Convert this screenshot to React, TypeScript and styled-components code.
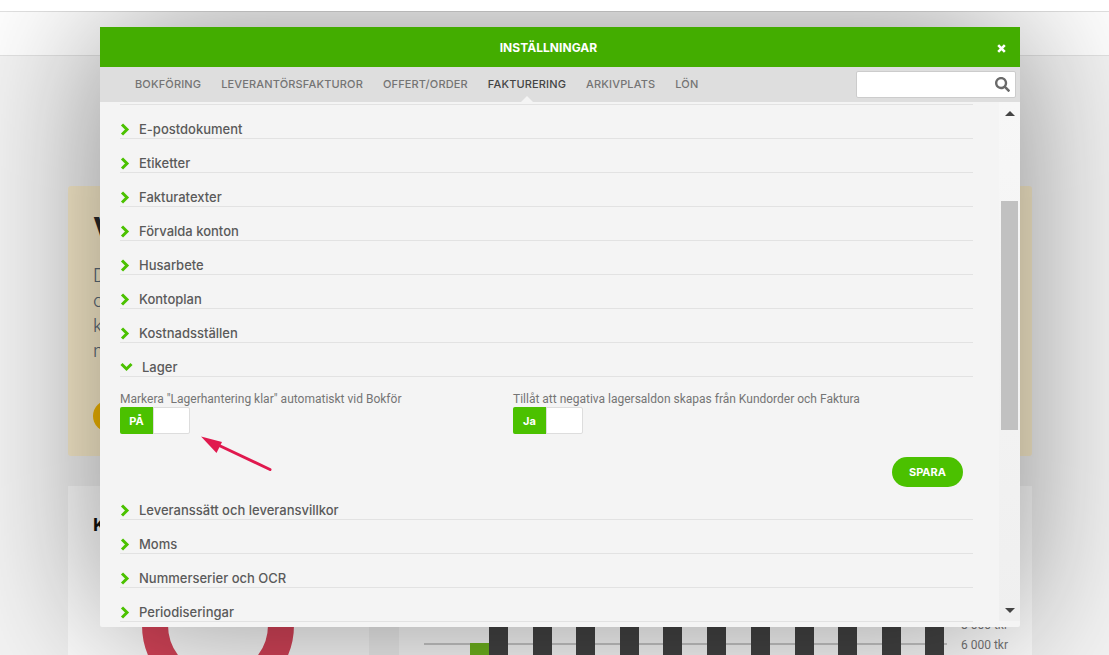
import {FunctionComponent} from 'react'
import styled, {createGlobalStyle} from 'styled-components'
import {FaSearch} from 'react-icons/fa'

const GlobalStyle = createGlobalStyle`
    html, body {
        margin: 0;
        padding: 0;
        background: #f4f4f4;
    }

    * {
        box-sizing: border-box;
    }
`

const Page = styled.div`
    position: relative;
    width: 1109px;
    height: 655px;
    overflow: hidden;
    padding-top: 11px;
    background: #f4f4f4;
    font-family: Inter, "Open Sans", sans-serif;
`

const TopStrip = styled.div`
    position: absolute;
    left: 0;
    right: 0;
    top: 0;
    height: 11px;
    background: #fff;
`

const TopBar = styled.div`
    height: 45px;
    background: #fff;
    border-top: 1px solid #e2e2e2;
    border-bottom: 1px solid #e2e2e2;
`

const Content = styled.div`
    width: 964px;
    margin: 130px 0 0 68px;
`

const Banner = styled.div`
    height: 270px;
    padding: 24px 25px;
    background: #fdf0cf;
    border-radius: 3px;
`

const BannerTitle = styled.h2`
    margin: 0 0 13px;
    font-size: 32px;
    line-height: 40px;
    font-weight: 700;
    color: #2a2a2a;
`

const BannerLine = styled.p`
    margin: 0;
    font-size: 18px;
    line-height: 25px;
    font-weight: 300;
    color: #5d6b78;
`

const BannerButton = styled.div`
    width: 150px;
    height: 32px;
    margin-top: 37px;
    border-radius: 16px;
    background: #f5b800;
`

const Cards = styled.div`
    display: grid;
    grid-template-columns: 301px 633px;
    gap: 30px;
    margin-top: 30px;
`

const Card = styled.div`
    height: 260px;
    padding: 27px 25px 0;
    background: #fff;
`

const CardTitle = styled.h3`
    margin: 0;
    font-size: 18px;
    line-height: 24px;
    font-weight: 700;
    color: #111;
`

const Donut = styled.svg`
    display: block;
    margin: 12px auto 0 49px;
`

const ChartSvg = styled.svg`
    display: block;
    margin: 93px 0 0 -25px;
`

const Overlay = styled.div`
    position: absolute;
    left: 0;
    right: 0;
    top: 11px;
    bottom: 0;
    overflow: hidden;
`

const Modal = styled.div`
    position: absolute;
    left: 100px;
    top: 16px;
    width: 920px;
    height: 600px;
    display: flex;
    flex-direction: column;
    background: #f4f4f4;
    border-radius: 2px;
    box-shadow: 0 0 150px rgba(0, 0, 0, 0.45);
`

const ModalHeader = styled.div`
    flex: none;
    height: 40px;
    display: flex;
    align-items: center;
    padding-right: 14px;
    background: #43ad00;
    color: #fff;
`

const ModalTitle = styled.div`
    flex: 1;
    text-align: center;
    font-size: 12px;
    font-weight: 700;
    letter-spacing: 0.05px;
`

const CloseIcon = styled.svg`
    flex: none;
    display: block;
    margin-top: 2px;
`

const Tabs = styled.div`
    flex: none;
    height: 35px;
    display: flex;
    align-items: center;
    gap: 20px;
    padding: 0 4px 0 35px;
    background: #dedede;
`

const Tab = styled.div<{ $active?: boolean }>`
    position: relative;
    line-height: 35px;
    font-size: 11px;
    font-weight: 500;
    letter-spacing: 0.15px;
    color: ${p => p.$active ? '#444' : '#747474'};

    ${p => p.$active && `
        &::after {
            content: '';
            position: absolute;
            left: 50%;
            bottom: 0;
            margin-left: -6px;
            border: 6px solid transparent;
            border-top: 0;
            border-bottom-color: #f4f4f4;
        }
    `}
`

const SearchBox = styled.div`
    width: 160px;
    height: 27px;
    margin: 0 0 0 auto;
    display: flex;
    align-items: center;
    justify-content: flex-end;
    padding-right: 5px;
    background: #fff;
    border: 1px solid #ccc;
    border-radius: 2px;
    color: #6a6a6a;
`

const SearchIcon = styled(FaSearch)`
    width: 15px;
    height: 15px;
`

const ModalBody = styled.div`
    flex: 1;
    min-height: 0;
    display: flex;
`

const List = styled.div`
    flex: 1;
    min-width: 0;
    overflow: hidden;
    padding: 2px 26px 0 20px;
`

const TopLine = styled.div`
    height: 1px;
    background: #e2e2e2;
`

const Row = styled.div`
    height: 34px;
    display: flex;
    align-items: flex-end;
    border-bottom: 1px solid #e2e2e2;
    color: #5a5a5a;
    font-size: 13px;
    font-weight: 500;
    line-height: 16px;
    padding-bottom: 1px;
`

const RowIcon = styled.span<{ $open?: boolean }>`
    flex: none;
    width: ${p => p.$open ? '22px' : '19px'};
    height: 16px;
    display: flex;
    align-items: center;
`

const Panel = styled.div`
    height: 109px;
    padding: 15px 10px 0 0;
`

const Settings = styled.div`
    display: grid;
    grid-template-columns: 393px 1fr;
`

const FieldLabel = styled.div`
    font-family: Roboto, sans-serif;
    font-size: 12px;
    line-height: 14px;
    color: #757575;
    margin-bottom: 1px;
`

const Toggle = styled.div`
    width: 70px;
    height: 27px;
    display: flex;
    background: #fff;
    border: 1px solid #ddd;
    border-radius: 2px;
`

const ToggleOn = styled.div`
    width: 34px;
    margin: -1px 0 -1px -1px;
    display: flex;
    align-items: center;
    justify-content: center;
    background: #4bc100;
    border-right: 1px solid #ddd;
    border-radius: 2px 0 0 2px;
    color: #fff;
    font-size: 11px;
    font-weight: 700;
`

const SaveRow = styled.div`
    display: flex;
    justify-content: flex-end;
    margin-top: 23px;
`

const SaveButton = styled.button`
    width: 71px;
    height: 30px;
    padding: 0;
    border: none;
    border-radius: 15px;
    background: #4bc100;
    color: #fff;
    font-family: inherit;
    font-size: 11px;
    font-weight: 700;
`

const Scrollbar = styled.div`
    flex: none;
    width: 21px;
    margin-bottom: 6px;
    display: flex;
    flex-direction: column;
    align-items: center;
    padding: 9px 0 8px;
    background: linear-gradient(#f7f7f7, #efefef);
`

const ScrollThumb = styled.div`
    width: 17px;
    height: 229px;
    margin-top: 85px;
    background: #c1c1c1;
`

const ScrollArrow = styled.div<{ $down?: boolean }>`
    width: 0;
    height: 0;
    border: 5px solid transparent;
    ${p => p.$down
            ? 'border-top: 5px solid #444; border-bottom: 0; margin-top: auto;'
            : 'border-bottom: 5px solid #444; border-top: 0;'}
`

const Arrow = styled.svg`
    position: absolute;
    left: 100px;
    top: 400px;
    pointer-events: none;
`

const topRows = ['E-postdokument', 'Etiketter', 'Fakturatexter', 'Förvalda konton', 'Husarbete', 'Kontoplan', 'Kostnadsställen']
const bottomRows = ['Leveranssätt och leveransvillkor', 'Moms', 'Nummerserier och OCR', 'Periodiseringar']
const tabs = ['BOKFÖRING', 'LEVERANTÖRSFAKTUROR', 'OFFERT/ORDER', 'FAKTURERING', 'ARKIVPLATS', 'LÖN']
const barStarts = [489, 533, 576, 620, 663, 707, 751, 795, 838, 882, 925]

const ChevronRight = () => (
    <svg width="10" height="13" viewBox="0 0 10 13">
        <polyline points="2,1.5 7,6.5 2,11.5" fill="none" stroke="#4bc100" strokeWidth="3"/>
    </svg>
)

const ChevronDown = () => (
    <svg width="13" height="10" viewBox="0 0 13 10">
        <polyline points="1.5,2 6.5,7 11.5,2" fill="none" stroke="#4bc100" strokeWidth="3"/>
    </svg>
)

const ClosedRow: FunctionComponent<{ label: string }> = ({label}) => (
    <Row>
        <RowIcon><ChevronRight/></RowIcon>
        {label}
    </Row>
)

const App: FunctionComponent = () => {
    return (
        <Page>
            <GlobalStyle/>
            <TopStrip/>
            <TopBar/>
            <Content>
                <Banner>
                    <BannerTitle>V</BannerTitle>
                    <BannerLine>D</BannerLine>
                    <BannerLine>c</BannerLine>
                    <BannerLine>k</BannerLine>
                    <BannerLine>n</BannerLine>
                    <BannerButton/>
                </Banner>
                <Cards>
                    <Card>
                        <CardTitle>K</CardTitle>
                        <Donut width="152" height="152" viewBox="0 0 152 152">
                            <circle cx="76" cy="76" r="63" fill="none" stroke="#d8455a" strokeWidth="26"/>
                        </Donut>
                    </Card>
                    <Card>
                        <ChartSvg width="633" height="60" viewBox="399 606 633 60">
                            <line x1="424" y1="644" x2="947" y2="644" stroke="#ccc" strokeWidth="2"/>
                            <rect x="470" y="643" width="19" height="23" fill="#72b81f"/>
                            {barStarts.map(x => <rect key={x} x={x} y="606" width="19" height="60" fill="#444"/>)}
                            <text x="961" y="629" fontSize="12" fill="#777" fontFamily="Roboto, sans-serif">8 000 tkr</text>
                            <text x="961" y="649" fontSize="12" fill="#777" fontFamily="Roboto, sans-serif">6 000 tkr</text>
                        </ChartSvg>
                    </Card>
                </Cards>
            </Content>

            <Overlay>
                <Modal>
                    <ModalHeader>
                        <ModalTitle>INSTÄLLNINGAR</ModalTitle>
                        <CloseIcon width="9" height="9" viewBox="0 0 9 9">
                            <path d="M1.2 1.2 L7.8 7.8 M7.8 1.2 L1.2 7.8" stroke="#fff" strokeWidth="2.6"/>
                        </CloseIcon>
                    </ModalHeader>
                    <Tabs>
                        {tabs.map(t => <Tab key={t} $active={t === 'FAKTURERING'}>{t}</Tab>)}
                        <SearchBox><SearchIcon/></SearchBox>
                    </Tabs>
                    <ModalBody>
                        <List>
                            <TopLine/>
                            {topRows.map(r => <ClosedRow key={r} label={r}/>)}
                            <Row>
                                <RowIcon $open><ChevronDown/></RowIcon>
                                Lager
                            </Row>
                            <Panel>
                                <Settings>
                                    <div>
                                        <FieldLabel>Markera "Lagerhantering klar" automatiskt vid Bokför</FieldLabel>
                                        <Toggle><ToggleOn>PÅ</ToggleOn></Toggle>
                                    </div>
                                    <div>
                                        <FieldLabel>Tillåt att negativa lagersaldon skapas från Kundorder och Faktura</FieldLabel>
                                        <Toggle><ToggleOn>Ja</ToggleOn></Toggle>
                                    </div>
                                </Settings>
                                <SaveRow><SaveButton>SPARA</SaveButton></SaveRow>
                            </Panel>
                            {bottomRows.map(r => <ClosedRow key={r} label={r}/>)}
                        </List>
                        <Scrollbar>
                            <ScrollArrow/>
                            <ScrollThumb/>
                            <ScrollArrow $down/>
                        </Scrollbar>
                    </ModalBody>
                </Modal>
            </Overlay>

            <Arrow width="200" height="100" viewBox="100 400 200 100">
                <line x1="270" y1="469.5" x2="216" y2="444" stroke="#e0194e" strokeWidth="3" strokeLinecap="round"/>
                <polygon points="201,436.5 222,442 216.5,453" fill="#e0194e"/>
            </Arrow>
        </Page>
    )
}

export default App
